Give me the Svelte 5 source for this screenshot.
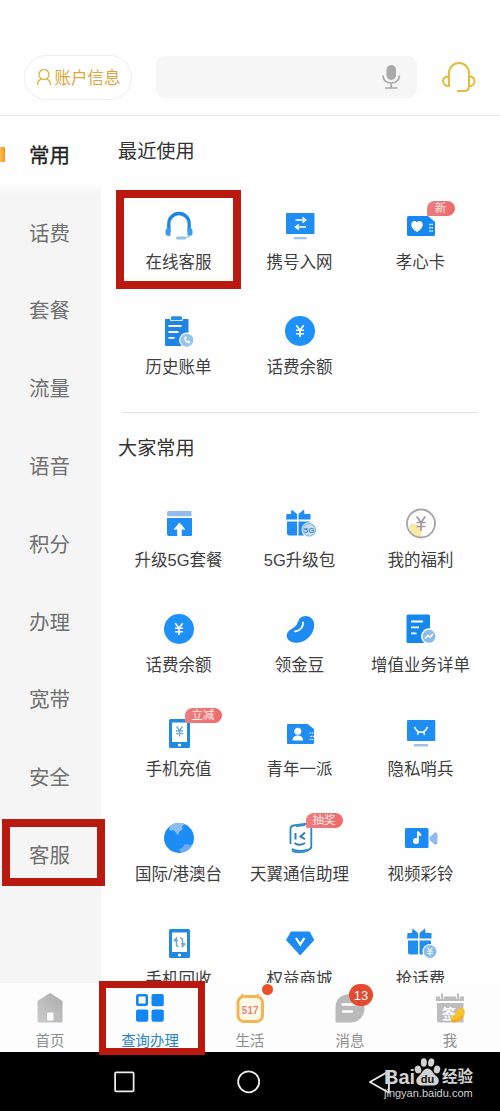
<script>
	let menu = ["常用", "话费", "套餐", "流量", "语音", "积分", "办理", "宽带", "安全", "客服"];
	let activeMenu = "常用";

	let recent = [
		{ name: "在线客服", icon: "headset", marked: true },
		{ name: "携号入网", icon: "transfer" },
		{ name: "孝心卡", icon: "heartcard", badge: "新" },
		{ name: "历史账单", icon: "bill" },
		{ name: "话费余额", icon: "yen" },
	];

	let popular = [
		{ name: "升级5G套餐", icon: "upgrade" },
		{ name: "5G升级包", icon: "gift5g" },
		{ name: "我的福利", icon: "welfare" },
		{ name: "话费余额", icon: "yen" },
		{ name: "领金豆", icon: "bean" },
		{ name: "增值业务详单", icon: "detail" },
		{ name: "手机充值", icon: "recharge", badge: "立减" },
		{ name: "青年一派", icon: "youth" },
		{ name: "隐私哨兵", icon: "privacy" },
		{ name: "国际/港澳台", icon: "globe" },
		{ name: "天翼通信助理", icon: "assistant", badge: "抽奖" },
		{ name: "视频彩铃", icon: "video" },
		{ name: "手机回收", icon: "recycle" },
		{ name: "权益商城", icon: "diamond" },
		{ name: "抢话费", icon: "giftyen" },
	];

	let groups = [
		{ title: "最近使用", items: recent },
		{ title: "大家常用", items: popular },
	];

	let tabs = [
		{ name: "首页", icon: "home" },
		{ name: "查询办理", icon: "apps", marked: true },
		{ name: "生活", icon: "life", dot: true },
		{ name: "消息", icon: "message", count: 13 },
		{ name: "我", icon: "me" },
	];
</script>

{#snippet gift()}
	<path d="M2.500 6h4.500L7.500 1.500 13 6v5.500H2zM14.500 6l5.500-4.500.5 4.500H26.500v5.500h-12z" fill="#1f8df2" />
	<path d="M3 13.500h10v14H5a2 2 0 0 1-2-2zM14.500 13.500H26v14H14.500z" fill="#1f8df2" />
{/snippet}

{#snippet phone()}
	<rect x="6" y="2" width="21" height="29" rx="1.500" fill="#2189e0" />
	<rect x="9" y="5.500" width="15" height="19.500" fill="#fff" />
	<circle cx="16.500" cy="28" r="1.600" fill="#fff" />
{/snippet}

{#snippet serviceIcon(icon)}
	<svg class="icon" viewBox="0 0 32 32" fill="none">
		{#if icon === "headset"}
			<path d="M5.800 22V13.700a10.200 10.200 0 0 1 20.400 0V22" stroke="#1f86e5" stroke-width="3.300" />
			<path d="M7.500 17.500v8.300H5a2.500 2.500 0 0 1-2.500-2.500v-2.500a3 3 0 0 1 2-2.700zM24.500 17.500v8.300H27a2.500 2.500 0 0 0 2.500-2.500v-2.500a3 3 0 0 0-2-2.700z" fill="#3a9bf0" />
			<path d="M26.500 25.500c-1.500 2.300-3 2.700-8 2.700" stroke="#a3cbed" stroke-width="1.500" />
			<rect x="13" y="26.500" width="10" height="3" rx="1.500" fill="#93c0e8" />
		{:else if icon === "transfer"}
			<rect x="2" y="3" width="28.500" height="21" rx="1" fill="#1f8df2" />
			<path d="M11.500 10h10m-3-2.700 3.300 2.700-3.300 2.700M22 17H12m3-2.700L11.500 17l3.500 2.700" stroke="#fff" stroke-width="1.500" />
			<rect x="9.500" y="27" width="13.500" height="2.300" rx="1.100" fill="#a0c7ef" />
		{:else if icon === "heartcard"}
			<path d="M3.500 6H23l7 6v12.500a1.500 1.500 0 0 1-1.500 1.500h-25A1.500 1.500 0 0 1 2 24.500v-17A1.500 1.500 0 0 1 3.500 6z" fill="#1688f0" />
			<path d="M12 22c-4-2-6-5-5.700-7.700.2-3.500 4-4.500 5.700-2 1.700-2.500 5.500-1.500 5.700 2C18 17 16 20 12 22z" fill="#fff" />
			<path d="M24 14.500h4M24 17.700h4M24 21h4" stroke="#d5eaff" stroke-width="1.400" stroke-dasharray="1.700 .6" />
		{:else if icon === "bill"}
			<path d="M2 4h23.500v20L20 31H3.500A1.500 1.500 0 0 1 2 29.500z" fill="#1f84e2" />
			<rect x="7" y="1" width="13" height="5" rx="1.500" fill="#fff" />
			<rect x="8" y="1.300" width="11" height="4" rx="1.200" fill="#2a8be6" />
			<path d="M5.500 11h13M5.500 17h10M5.500 22.800h6" stroke="#fff" stroke-width="1.800" />
			<circle cx="23.800" cy="25.200" r="7.600" fill="#fff" />
			<circle cx="23.800" cy="25.200" r="6.500" fill="#96c3ea" />
			<path d="M21.500 22c-.6 3.500 2 6.500 5 6.300l.8-1.700-1.800-1-1 .7c-1-.4-1.500-1.300-1.600-2.300l.9-1-.8-1.800z" fill="#fff" />
		{:else if icon === "yen"}
			<circle cx="16" cy="16" r="15" fill="#1e90fa" />
			<path d="m12.300 10.200 3.700 5 3.700-5M16 15v7M12 15.300h8M12 18.700h8" stroke="#fff" stroke-width="1.600" />
		{:else if icon === "upgrade"}
			<path d="M5 3h23.500v5.200H4.200V4z" fill="#91bdee" />
			<path d="M4 10h25v17a1 1 0 0 1-1 1H6a2 2 0 0 1-2-2z" fill="#1f8df2" />
			<path d="m16.500 14.500 6 7h-3.700V28h-4.600v-6.500h-3.700z" fill="#fff" />
		{:else if icon === "gift5g"}
			{@render gift()}
			<circle cx="25.200" cy="21.800" r="7.600" fill="#fff" />
			<circle cx="25.200" cy="21.800" r="6.300" fill="#c3dcee" stroke="#74afdf" />
			<text x="25.200" y="24.500" class="tiny" fill="#548fc1">5G</text>
		{:else if icon === "welfare"}
			<path d="M5 16c4-1 9 1 11 5v8C9 29 4 24 5 16z" fill="#fae7a2" />
			<circle cx="16" cy="15.500" r="14" stroke="#a9a5a5" stroke-width="1.800" />
			<path d="m11.700 8.500 4.300 6 4.300-6M16 14v9M11.500 14.500h9M11.500 18.500h9" stroke="#a5969b" stroke-width="1.700" />
		{:else if icon === "bean"}
			<path d="M17.500 4C24 1 30 5 30.200 11.500 30.500 20 23 29.500 13 29.700 6 30 2 26 2.800 21.500c1-5 7-5.500 10-10C14.200 9 14.500 5.500 17.500 4z" fill="#1e8bf2" />
			<path d="M19 9.500c.5 4.500-3 8.500-8 9" stroke="#fff" stroke-width="1.800" stroke-linecap="round" />
		{:else if icon === "detail"}
			<path d="M3 1.500h20.500A1.500 1.500 0 0 1 25 3v19l-6 8H3a1.500 1.500 0 0 1-1.500-1.500V3A1.500 1.500 0 0 1 3 1.500z" fill="#1688ec" />
			<path d="M6 8.500h12M6 14.300h8M6 20.300h5.500" stroke="#fff" stroke-width="1.800" />
			<circle cx="24" cy="23.300" r="8" fill="#fff" />
			<circle cx="24" cy="23.300" r="6.500" fill="#8dbde6" />
			<path d="m20 25.500 3-3 2 1.700 3-3.500" stroke="#fff" stroke-width="1.500" />
		{:else if icon === "recharge"}
			{@render phone()}
			<path d="m13.500 9.500 3 4 3-4M16.500 13.500v6M13 14h7M13 16.700h7" stroke="#6fa9d6" stroke-width="1.300" />
		{:else if icon === "youth"}
			<path d="M4 7h19.500l6.500 5v14a1 1 0 0 1-1 1H4a1 1 0 0 1-1-1V8a1 1 0 0 1 1-1z" fill="#1f8df2" />
			<circle cx="13.800" cy="14.300" r="3.500" fill="#fff" />
			<path d="M8.500 23.500c0-4 3-5 5.300-5s5.300 1 5.300 5z" fill="#fff" />
			<path d="M25.500 16H30M26.500 19.300H30M25.500 22.500H30" stroke="#fff" stroke-width="1.200" stroke-dasharray="1.500 .7" />
		{:else if icon === "privacy"}
			<rect x="2" y="3" width="28.300" height="21" rx="1" fill="#1f8df2" />
			<path d="m9.500 9.800 1 2c1.500 2.500 3.500 3.500 5.500 3.500s4-1 5.500-3.500l1-2M13.200 14.500l-.7 3.500M18.800 14.500l.7 3.500" stroke="#fff" stroke-width="1.500" />
			<rect x="8.700" y="27" width="14.500" height="2.600" rx="1.200" fill="#a0c3e8" />
		{:else if icon === "globe"}
			<circle cx="16" cy="16" r="15" fill="#1e8cf5" />
			<path d="M6.500 4.500C11 .5 18 0 22 2.300l-3 2 .5 3.500-3 1.500-1.500 4-4-5-4.500.2z" fill="#8bbdee" />
			<path d="m22 22 4 1 3.500-.5c-2 4-6 7-10.500 8.200l-3.500-3 4-2z" fill="#6dadee" />
		{:else if icon === "assistant"}
			<path d="M6.500 22V7c0-2 1-3.200 3-3.500l15.500-2c1.500 0 2.300.8 2.300 2.200v20.500c0 2-1 3.200-3 3.500-6 1.500-11.500 2.500-16.500-.7" stroke="#2787c6" stroke-width="1.800" />
			<path d="M8 28.700c6 2.700 12 1.500 17-.7M12 4.200l9-1.200" stroke="#3b91d0" stroke-width="2.200" />
			<path d="M11.500 11v6.500M21 10.500l-4.500 4 4.500 2.700M10.500 21c3 2.300 7 2 10.500 0" stroke="#347dbb" stroke-width="2" />
		{:else if icon === "video"}
			<rect x="0" y="6" width="23.500" height="20" rx="1.500" fill="#1c8af5" />
			<path d="M24.500 15.500 29 11q3.500-2 3.500 2v7q0 4-3.500 2l-4.500-4z" fill="#91bbed" />
			<circle cx="11" cy="19" r="3" fill="#fff" />
			<path d="M12.900 19V9.500c.3 2 2.600 1.500 2.600 4.500" stroke="#fff" stroke-width="1.800" />
		{:else if icon === "recycle"}
			{@render phone()}
			<path d="M10.700 13.700 13.500 11v6.500q0 2 2.300 2M22.300 16.700l-2.800 2.800V13q0-2-2.300-2M11 13.700h4M18 16.700h4" stroke="#75a9d5" stroke-width="1.500" />
		{:else if icon === "diamond"}
			<path d="M7 4.500h18.500L30.300 13 16.200 28.500 2 13z" fill="#1e8bf2" />
			<path d="m12 11 4.200 6.500L20.400 11" stroke="#fff" stroke-width="2.300" />
		{:else if icon === "giftyen"}
			{@render gift()}
			<circle cx="25" cy="24.500" r="7.600" fill="#fff" />
			<circle cx="25" cy="24.500" r="6.500" fill="#8abce8" />
			<path d="m22.500 20.500 2.500 3.300 2.500-3.300M25 23.500v5.300M22 24.300h6M22 26.500h6" stroke="#e9f5ff" stroke-width="1.100" />
		{/if}
	</svg>
{/snippet}

{#snippet tabIcon(icon)}
	<svg class="tab-icon" viewBox="0 0 32 32" fill="none">
		{#if icon === "home"}
			<path d="M15 1.500q1-.7 2 0L28.500 9v20.500a1 1 0 0 1-1 1h-23a1 1 0 0 1-1-1V9z" fill="url(#homeFill)" />
			<rect x="13" y="20.500" width="6.500" height="8" rx="1" fill="#fff" />
			<defs>
				<linearGradient id="homeFill" x1="1" y1="0" x2="0" y2="1">
					<stop stop-color="#adadad" />
					<stop offset="1" stop-color="#cbcbcb" />
				</linearGradient>
			</defs>
		{:else if icon === "apps"}
			<rect x="3.300" y="3.300" width="9.500" height="9.500" rx="1" stroke="#1286f3" stroke-width="2.600" />
			<rect x="17.500" y="2" width="12.300" height="12.300" rx="2" fill="#1286f3" />
			<rect x="2" y="17.500" width="12.300" height="12.300" rx="2" fill="#1286f3" />
			<rect x="17.500" y="17.500" width="12.300" height="12.300" rx="2" fill="#1286f3" />
		{:else if icon === "life"}
			<path d="m9 5-1-3M23 5l1-3" stroke="#efb65b" stroke-width="2" />
			<rect x="4" y="4.500" width="24.500" height="25" rx="6" fill="#fff8e6" stroke="#f3b553" stroke-width="3" />
			<text x="16.200" y="22" class="life-text" fill="#e8837e">517</text>
		{:else if icon === "message"}
			<path d="M3 30.500a1.500 1.500 0 0 1-1.500-1.500V15C1.500 7 8 2 16 2s14.500 6 14.500 14S25 30.500 16 30.500z" fill="#bababa" />
			<path d="M8.500 12.500h14M9 19.500h9" stroke="#fff" stroke-width="2.500" stroke-linecap="round" />
		{:else if icon === "me"}
			<path d="M3 4.500h27V9H2V5.500a1 1 0 0 1 1-1zM3 11h26.500v19.500H5a2 2 0 0 1-2-2z" fill="#bdbdbd" />
			<path d="M8 2v5M24 2v5" stroke="#fff" stroke-width="4" />
			<path d="M8 1.500V7M24 1.500V7" stroke="#bdbdbd" stroke-width="2" />
			<text x="15" y="26.500" class="sign-text" fill="#fff">签</text>
			<path d="M17 28c-.8-4 3-4 4.500-6.500s2.500-6 6-5.500c3.800.5 4 5 2.300 8.200C27.500 29 19 33.500 17 28z" fill="#f6c32c" />
			<path d="M17.500 28.500c3.500 1.500 8.500-.5 11-4.500" stroke="#f2a52c" stroke-width="2" />
		{/if}
	</svg>
{/snippet}

<div class="screen">
	<header class="header">
		<button class="account">
			<svg width="16" height="18" viewBox="0 0 16 18" fill="none" stroke="#dbb84f" stroke-width="1.400">
				<circle cx="8" cy="6.500" r="5" />
				<path d="M1.500 17c0-3 1.500-5 4-6M14.500 17c0-3-1.500-5-4-6" />
			</svg>
			账户信息
		</button>
		<div class="search">
			<svg width="20" height="26" viewBox="0 0 20 26" fill="none">
				<rect x="5.500" y="1" width="9.500" height="15" rx="4.700" fill="#a9a9a9" />
				<path d="M2 11.500c0 4.500 3 7.500 8.200 7.500s8.200-3 8.200-7.500M10.200 19v5M4 24h12.500" stroke="#a9a9a9" stroke-width="1.700" />
			</svg>
		</div>
		<svg class="service" viewBox="0 0 36 34" fill="none" stroke="#e3bc3c" stroke-width="2">
			<path d="M9 24V13a10 10 0 0 1 20 0v13c0 4-2 5-5 5h-7" />
			<path d="M9 16.500C5 16.500 3 18.500 3 21s2 5 6 5zM29 16.500c3.500 0 5.500 2 5.500 4.700s-2 5-5.500 5" />
		</svg>
	</header>

	<div class="main">
		<nav class="sidebar">
			{#each menu as item}
				<div class="menu-item" class:active={item === activeMenu}>
					<span>{item}</span>
					{#if item === "客服"}<span class="frame frame-menu"></span>{/if}
				</div>
			{/each}
		</nav>

		<div class="content">
			{#each groups as group}
				<section>
					<h2>{group.title}</h2>
					<div class="grid">
						{#each group.items as item}
							<div class="service-item">
								<div class="icon-box">
									{@render serviceIcon(item.icon)}
									{#if item.badge}<span class="badge" class:short={item.badge.length === 1}>{item.badge}</span>{/if}
								</div>
								<span class="label">{item.name}</span>
								{#if item.marked}<span class="frame frame-service"></span>{/if}
							</div>
						{/each}
					</div>
				</section>
			{/each}
		</div>
	</div>

	<nav class="tabbar">
		{#each tabs as tab}
			<div class="tab" class:current={tab.marked}>
				{@render tabIcon(tab.icon)}
				<span>{tab.name}</span>
				{#if tab.dot}<i class="dot"></i>{/if}
				{#if tab.count}<b class="count">{tab.count}</b>{/if}
				{#if tab.marked}<span class="frame frame-tab"></span>{/if}
			</div>
		{/each}
	</nav>

	<footer class="system">
		<svg viewBox="0 0 26 26" fill="none" stroke="#eee" stroke-width="1.800"><rect x="3.200" y="3" width="19" height="19.500" rx="1" /></svg>
		<svg viewBox="0 0 26 26" fill="none" stroke="#eee" stroke-width="1.800"><circle cx="13" cy="12.800" r="10.800" /></svg>
		<svg viewBox="0 0 26 26" fill="none" stroke="#eee" stroke-width="1.800"><path d="M22.500 2v22L3 13z" stroke-linejoin="round" /></svg>
		<div class="watermark">
			<div class="brand">
				<span class="bai">Bai</span>
				<svg width="27" height="30" viewBox="0 0 27 30" fill="#d2d2d2">
					<ellipse cx="4" cy="12.500" rx="3.200" ry="4" transform="rotate(-15 4 12.500)" />
					<ellipse cx="9.800" cy="5.500" rx="3" ry="4.200" />
					<ellipse cx="17.200" cy="5.500" rx="3" ry="4.200" transform="rotate(12 17.200 5.500)" />
					<ellipse cx="23" cy="12.500" rx="3.200" ry="4" transform="rotate(15 23 12.500)" />
					<path d="M13.500 11.500c4 0 5 4 7.500 6.500 3 2.500 4.500 4.500 3.500 7.500-1.500 4-6 3-11 3s-9.500 1-11-3c-1-3 .5-5 3.500-7.500 2.500-2.500 3.500-6.500 7.500-6.500z" />
					<text x="13.500" y="25.500" class="du">du</text>
				</svg>
				<span class="jingyan">经验</span>
			</div>
			<div class="site">jingyan.baidu.com</div>
		</div>
	</footer>
</div>

<style>
	:global(body) {
		background: #fff;
		font-family: "Liberation Sans", "Noto Sans CJK SC", sans-serif;
	}

	.screen {
		width: 500px;
		height: 1111px;
		display: flex;
		flex-direction: column;
		overflow: hidden;
		background: #fefefe;
		color: #3f3f3f;
	}

	.header {
		box-sizing: border-box;
		height: 116px;
		padding: 39px 24px 0 24px;
		display: flex;
		align-items: center;
		border-bottom: 1px solid #ececec;
		flex-shrink: 0;
	}
	.account {
		box-sizing: border-box;
		width: 108px;
		height: 45px;
		padding: 0;
		display: flex;
		align-items: center;
		justify-content: center;
		gap: 3px;
		border: 1.5px solid #eee;
		border-radius: 23px;
		background: #fff;
		color: #dda63a;
		font-family: inherit;
		font-size: 16.5px;
		white-space: nowrap;
	}
	.search {
		box-sizing: border-box;
		width: 261px;
		height: 42px;
		margin-left: 24px;
		padding-right: 16px;
		display: flex;
		align-items: center;
		justify-content: flex-end;
		border-radius: 9px;
		background: #f6f6f6;
	}
	.service {
		width: 36px;
		height: 34px;
		margin-left: auto;
	}

	.main {
		height: 867px;
		display: flex;
		flex-shrink: 0;
	}
	.sidebar {
		width: 101px;
		background: #f5f5f5;
		flex-shrink: 0;
	}
	.menu-item {
		position: relative;
		box-sizing: border-box;
		height: 77.8px;
		padding: 0 2px 2px 0;
		display: flex;
		align-items: center;
		justify-content: center;
		font-size: 20.5px;
		color: #707070;
	}
	.menu-item.active {
		background: linear-gradient(#fefefe 88%, #f5f5f5);
		color: #222;
		-webkit-text-stroke: 0.3px #222;
	}
	.menu-item.active::before {
		content: "";
		position: absolute;
		left: 0;
		top: 31px;
		width: 5px;
		height: 15px;
		background: linear-gradient(90deg, #ffbd4b, #f59424);
	}

	.content {
		flex: 1;
		padding-left: 17px;
		overflow: hidden;
	}
	section {
		height: 296px;
	}
	section + section {
		height: auto;
	}
	section + section::before {
		content: "";
		display: block;
		width: 356px;
		height: 1px;
		margin-left: 4px;
		background: #e6e6e6;
	}
	h2 {
		height: 36px;
		margin: 0;
		padding-top: 18px;
		font-size: 19.2px;
		line-height: 36px;
		font-weight: 400;
		color: #333;
	}
	.grid {
		display: grid;
		grid-template-columns: repeat(3, 121px);
		grid-auto-rows: 104.7px;
		padding-top: 24px;
	}
	section:first-child .grid {
		padding-top: 24px;
	}
	.service-item {
		position: relative;
		padding-top: 16px;
		display: flex;
		flex-direction: column;
		align-items: center;
	}
	.icon-box {
		position: relative;
		width: 32px;
		height: 32px;
	}
	.icon {
		display: block;
		width: 32px;
		height: 32px;
		overflow: visible;
	}
	.label {
		height: 24px;
		margin-top: 8px;
		font-size: 16.5px;
		line-height: 24px;
		white-space: nowrap;
	}
	.badge {
		position: absolute;
		left: 22px;
		top: -9px;
		width: 37px;
		height: 15px;
		border-radius: 8px 8px 8px 1px;
		background: linear-gradient(90deg, #ea7e80, #ef6a6b);
		color: #ffe9e5;
		font-size: 11.5px;
		line-height: 15px;
		text-align: center;
		white-space: nowrap;
	}
	.badge.short {
		width: 28px;
	}
	section + section .grid {
		padding-top: 25px;
	}
	.tiny {
		font-size: 8px;
		font-weight: 700;
		text-anchor: middle;
	}

	/* red marker frames */
	.frame {
		position: absolute;
		box-sizing: border-box;
		border: 8px solid #b9190f;
		z-index: 2;
	}
	.frame-service {
		left: -2px;
		top: -4px;
		width: 125px;
		height: 99px;
	}
	.frame-menu {
		left: 2px;
		top: 3px;
		width: 103px;
		height: 67px;
	}
	.frame-tab {
		left: -1px;
		top: -2px;
		width: 106px;
		height: 74px;
		border-width: 7px;
	}

	.tabbar {
		height: 69px;
		display: flex;
		flex-shrink: 0;
		background: #fdfdfd;
	}
	.tab {
		position: relative;
		width: 100px;
		padding-top: 9px;
		display: flex;
		flex-direction: column;
		align-items: center;
		font-size: 14.4px;
		line-height: 20px;
		color: #8d8d8d;
	}
	.tab.current {
		color: #2385cc;
	}
	.tab-icon {
		width: 32px;
		height: 32px;
		margin-bottom: 7px;
	}
	.life-text {
		font-size: 10px;
		font-weight: 700;
		text-anchor: middle;
	}
	.sign-text {
		font-size: 14px;
		font-weight: 700;
		text-anchor: middle;
	}
	.dot {
		position: absolute;
		left: 62px;
		top: 1px;
		width: 11px;
		height: 11px;
		border-radius: 50%;
		background: #e95226;
	}
	.count {
		position: absolute;
		left: 49px;
		top: 1px;
		width: 24px;
		height: 22px;
		border-radius: 12px;
		background: #e34a30;
		color: #fff;
		font-size: 13px;
		font-weight: 400;
		line-height: 23px;
		text-align: center;
	}

	.system {
		position: relative;
		height: 59px;
		padding: 17px 108px 0 112px;
		display: flex;
		gap: 99px;
		background: #000;
	}
	.system > svg {
		width: 26px;
		height: 26px;
	}
	.system > svg:nth-of-type(3) {
		margin-left: 6px;
	}
	.watermark {
		position: absolute;
		left: 384px;
		top: 5px;
		color: #d2d2d2;
	}
	.brand {
		height: 30px;
		display: flex;
		align-items: flex-end;
	}
	.bai {
		width: 30px;
		font-size: 20px;
		font-weight: 700;
		line-height: 20px;
	}
	.jingyan {
		margin-left: 1px;
		font-size: 15.5px;
		font-weight: 700;
		line-height: 20px;
		white-space: nowrap;
	}
	.du {
		font-size: 11px;
		font-weight: 700;
		text-anchor: middle;
		fill: #111;
	}
	.site {
		font-size: 11px;
		line-height: 13px;
	}
</style>
